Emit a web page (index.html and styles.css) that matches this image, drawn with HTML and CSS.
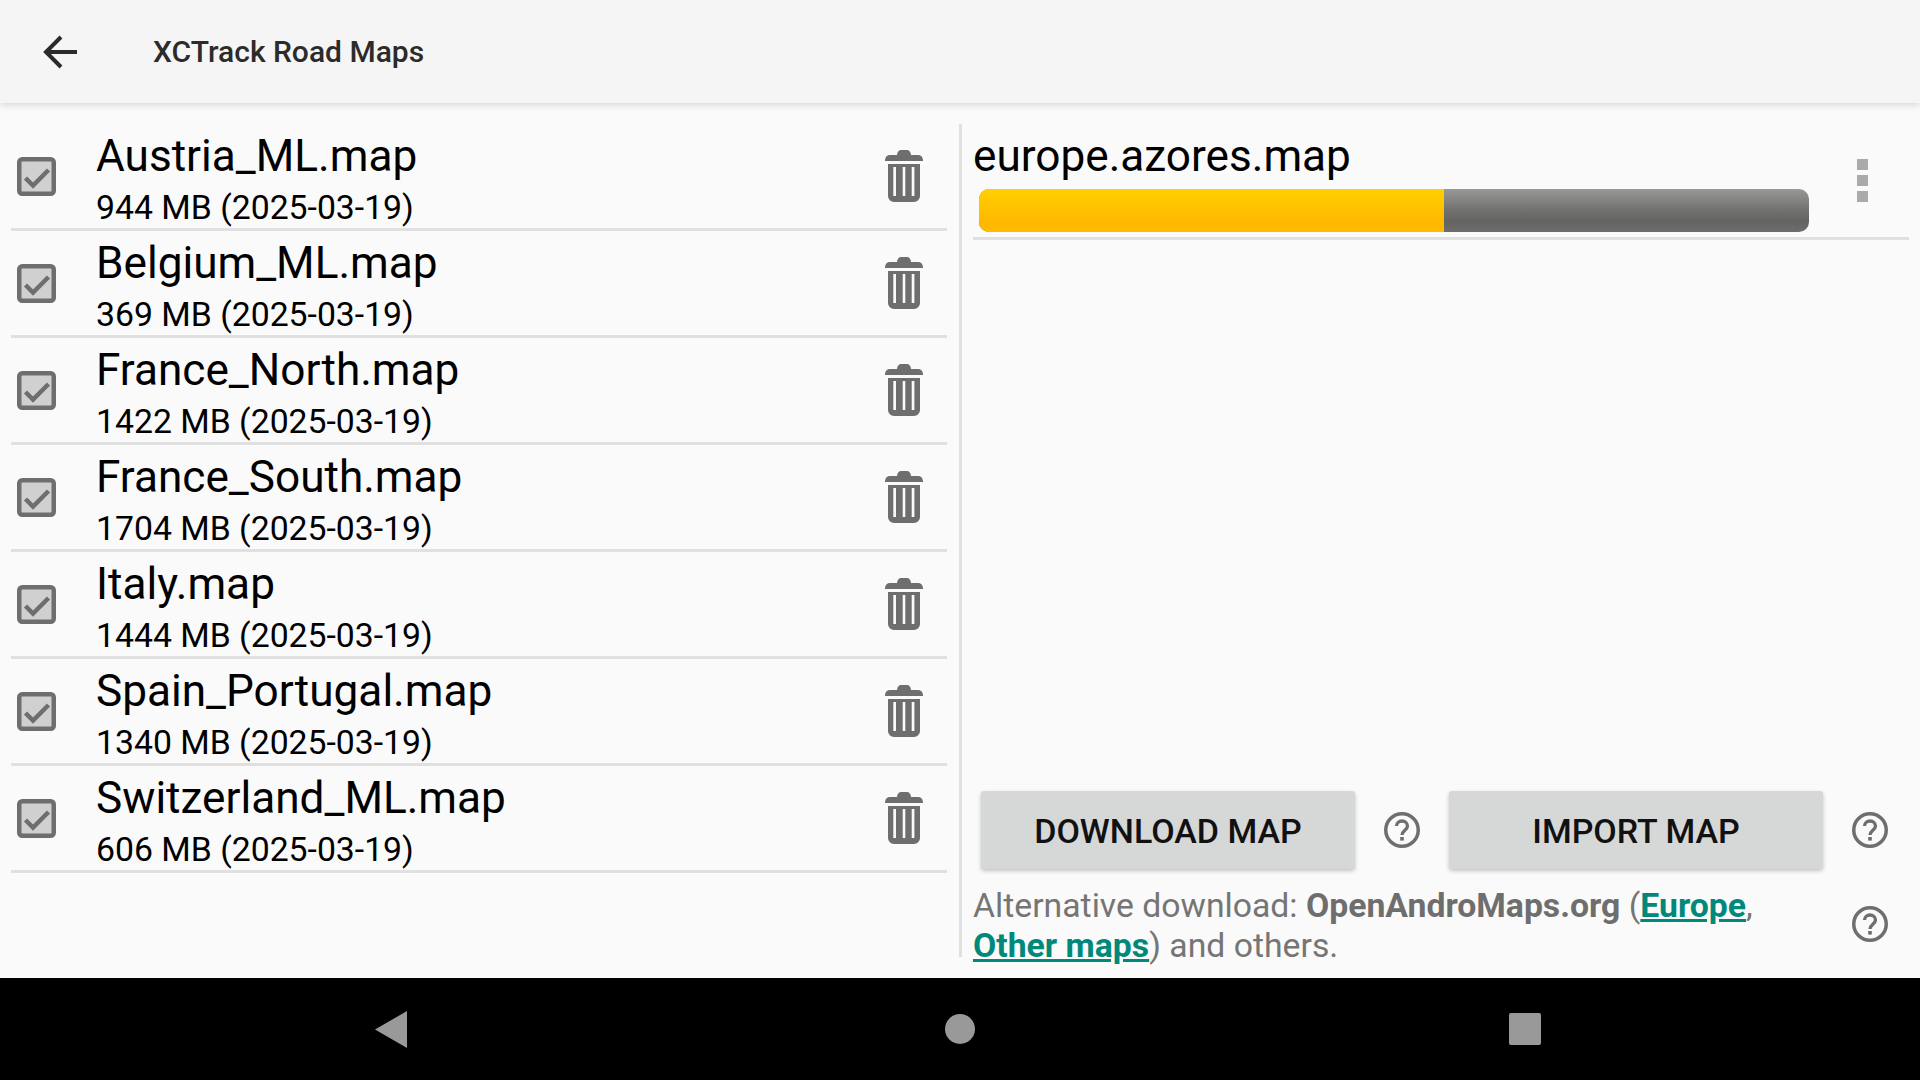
FILE: index.html

```html
<!DOCTYPE html>
<html lang="en">
<head>
    <meta charset="UTF-8">
    <title>XCTrack Road Maps</title>
    <link rel="stylesheet" href="styles.css">
</head>
<body>
<svg class="sprites" width="0" height="0">
    <symbol id="check" viewBox="0 0 39 39">
        <rect x="2.250" y="2.250" width="34.500" height="34.500" rx="3" fill="#d0d0d0" stroke="#6e6e6e" stroke-width="4.500"/>
        <path d="M8.500 21l7.500 7.500 15.500-15.500" fill="none" stroke="#6e6e6e" stroke-width="4.500"/>
    </symbol>
    <symbol id="trash" viewBox="0 0 38 52">
        <path d="M12 5c0-3 2-5 4-5h6c2 0 4 2 4 5z" fill="#6e6e6e"/>
        <path d="M0 11c0-4 2-6 5-6h28c3 0 5 2 5 6z" fill="#6e6e6e"/>
        <path fill-rule="evenodd" d="M3 14h32v32c0 3-3 6-6 6H9c-3 0-6-3-6-6zM8.300 17v29h2.700V17zM17.700 17v29h2.600V17zM26.700 17v29h2.700V17z" fill="#6e6e6e"/>
    </symbol>
    <symbol id="help" viewBox="0 0 36 36">
        <circle cx="18" cy="18" r="16.250" fill="none" stroke="#6e6e6e" stroke-width="3.500"/>
        <path d="M12.500 14c0-3 2.500-5 5.500-5s5.500 2 5.500 5c0 4-5.500 4.500-5.500 9" fill="none" stroke="#6e6e6e" stroke-width="3.300"/>
        <rect x="16.200" y="25" width="3.600" height="3.600" fill="#6e6e6e"/>
    </symbol>
</svg>

<header class="app-bar">
    <svg class="back-icon" viewBox="0 0 34 34"><path d="M34 17H4M18 2L3 17l15 15" fill="none" stroke="#2b2b2b" stroke-width="4"/></svg>
    <h1 class="app-title">XCTrack Road Maps</h1>
</header>

<main class="content">
    <section class="map-list">
        <div class="map-row">
            <svg class="check-icon"><use href="#check"/></svg>
            <div class="map-info">
                <div class="map-name">Austria_ML.map</div>
                <div class="map-meta">944 MB (2025-03-19)</div>
            </div>
            <svg class="trash-icon"><use href="#trash"/></svg>
        </div>
        <div class="map-row">
            <svg class="check-icon"><use href="#check"/></svg>
            <div class="map-info">
                <div class="map-name">Belgium_ML.map</div>
                <div class="map-meta">369 MB (2025-03-19)</div>
            </div>
            <svg class="trash-icon"><use href="#trash"/></svg>
        </div>
        <div class="map-row">
            <svg class="check-icon"><use href="#check"/></svg>
            <div class="map-info">
                <div class="map-name">France_North.map</div>
                <div class="map-meta">1422 MB (2025-03-19)</div>
            </div>
            <svg class="trash-icon"><use href="#trash"/></svg>
        </div>
        <div class="map-row">
            <svg class="check-icon"><use href="#check"/></svg>
            <div class="map-info">
                <div class="map-name">France_South.map</div>
                <div class="map-meta">1704 MB (2025-03-19)</div>
            </div>
            <svg class="trash-icon"><use href="#trash"/></svg>
        </div>
        <div class="map-row">
            <svg class="check-icon"><use href="#check"/></svg>
            <div class="map-info">
                <div class="map-name">Italy.map</div>
                <div class="map-meta">1444 MB (2025-03-19)</div>
            </div>
            <svg class="trash-icon"><use href="#trash"/></svg>
        </div>
        <div class="map-row">
            <svg class="check-icon"><use href="#check"/></svg>
            <div class="map-info">
                <div class="map-name">Spain_Portugal.map</div>
                <div class="map-meta">1340 MB (2025-03-19)</div>
            </div>
            <svg class="trash-icon"><use href="#trash"/></svg>
        </div>
        <div class="map-row">
            <svg class="check-icon"><use href="#check"/></svg>
            <div class="map-info">
                <div class="map-name">Switzerland_ML.map</div>
                <div class="map-meta">606 MB (2025-03-19)</div>
            </div>
            <svg class="trash-icon"><use href="#trash"/></svg>
        </div>
    </section>

    <section class="side-panel">
        <div class="download-row">
            <div class="download-info">
                <div class="map-name">europe.azores.map</div>
                <div class="progress"><div class="progress-fill"></div></div>
            </div>
            <div class="more-dots"><span></span><span></span><span></span></div>
        </div>

        <div class="spacer"></div>

        <div class="button-row">
            <button class="action-btn">DOWNLOAD MAP</button>
            <svg class="help-icon"><use href="#help"/></svg>
            <button class="action-btn">IMPORT MAP</button>
            <svg class="help-icon"><use href="#help"/></svg>
        </div>

        <div class="alt-row">
            <p class="alt-text">Alternative download: <b>OpenAndroMaps.org</b> (<a href="#">Europe</a>,<br><a href="#">Other maps</a>) and others.</p>
            <svg class="help-icon"><use href="#help"/></svg>
        </div>
    </section>
</main>

<nav class="nav-bar">
    <svg class="nav-back" viewBox="0 0 32 37"><path d="M0 18.500L32 0v37z" fill="#999"/></svg>
    <span class="nav-home"></span>
    <span class="nav-recent"></span>
</nav>
</body>
</html>
```

FILE: styles.css

```css
* {
    box-sizing: border-box;
}

html, body {
    height: 100%;
}

body {
    margin: 0;
    display: flex;
    flex-direction: column;
    font-family: Roboto, sans-serif;
    background-color: #fafafa;
    color: #000;
    overflow: hidden;
}

.sprites {
    position: absolute;
}

.app-bar {
    height: 103px;
    flex: none;
    display: flex;
    align-items: center;
    padding-left: 43px;
    background-color: #f5f5f5;
    box-shadow: 0 1px 8px rgba(0, 0, 0, 0.18);
    position: relative;
}

.back-icon {
    width: 34px;
    height: 34px;
}

.app-title {
    margin: 0 0 0 76px;
    font-size: 30px;
    font-weight: 500;
    color: #2b2b2b;
}

.content {
    flex: 1;
    display: flex;
    min-height: 0;
}

.map-list {
    width: 959px;
    flex: none;
    padding: 21px 12px 0 11px;
}

.map-row {
    height: 107px;
    display: flex;
    align-items: center;
    border-bottom: 3px solid #e0e0e0;
}

.check-icon {
    width: 39px;
    height: 39px;
    margin-left: 6px;
    flex: none;
}

.map-info {
    flex: 1;
    margin-left: 40px;
}

.map-name {
    font-size: 44.150px;
    line-height: 52px;
}

.map-info .map-name {
    margin-top: 2px;
}

.map-meta {
    font-size: 33.750px;
    line-height: 42px;
    margin-top: 5px;
    margin-bottom: -5px;
}

.trash-icon {
    width: 38px;
    height: 52px;
    margin-right: 24px;
    flex: none;
}

.side-panel {
    flex: 1;
    min-width: 0;
    display: flex;
    flex-direction: column;
    margin-top: 21px;
    margin-bottom: 21px;
    padding: 0 11px;
    border-left: 3px solid #e0e0e0;
}

.download-row {
    display: flex;
    height: 116px;
    padding-top: 6px;
    border-bottom: 3px solid #e0e0e0;
}

.download-info {
    flex: 1;
}

.progress {
    width: 830px;
    height: 43px;
    margin: 7px 0 0 6px;
    border-radius: 10px;
    overflow: hidden;
    background: linear-gradient(#999a98, #747573 45%, #636462 75%, #6d6e6c);
}

.progress-fill {
    width: 465px;
    height: 100%;
    background: linear-gradient(#ffd000, #ffb800 75%, #ffbc00);
}

.more-dots {
    display: flex;
    flex-direction: column;
    gap: 5px;
    padding: 29px 41px 0 0;
}

.more-dots span {
    width: 11px;
    height: 11px;
    background-color: #aaa;
}

.spacer {
    flex: 1;
}

.button-row {
    display: flex;
    align-items: center;
    gap: 29px;
    padding-left: 8px;
}

.action-btn {
    width: 374px;
    height: 78px;
    padding-top: 2px;
    border: none;
    border-radius: 3px;
    background-color: #d6d7d7;
    box-shadow: 0 2px 4px rgba(0, 0, 0, 0.22);
    color: #111;
    font-family: Roboto, sans-serif;
    font-size: 34px;
    font-weight: 500;
}

.help-icon {
    width: 36px;
    height: 36px;
    flex: none;
}

.alt-row {
    display: flex;
    align-items: center;
    justify-content: space-between;
    margin-top: 17px;
    margin-bottom: -9px;
}

.alt-row .help-icon {
    margin: 0 21px 4px 0;
}

.alt-text {
    margin: 0;
    font-size: 33.750px;
    line-height: 40px;
    color: #757575;
}

.alt-text b {
    font-weight: 700;
    color: #6e6e6e;
}

.alt-text a {
    font-weight: 700;
    color: #00897b;
}

.nav-bar {
    height: 102px;
    flex: none;
    display: flex;
    align-items: center;
    justify-content: space-between;
    padding: 0 379px 0 375px;
    background-color: #000;
}

.nav-back {
    width: 32px;
    height: 37px;
}

.nav-home {
    width: 30px;
    height: 30px;
    margin-left: 4px;
    border-radius: 50%;
    background-color: #999;
}

.nav-recent {
    width: 32px;
    height: 32px;
    border-radius: 2px;
    background-color: #999;
}
```
